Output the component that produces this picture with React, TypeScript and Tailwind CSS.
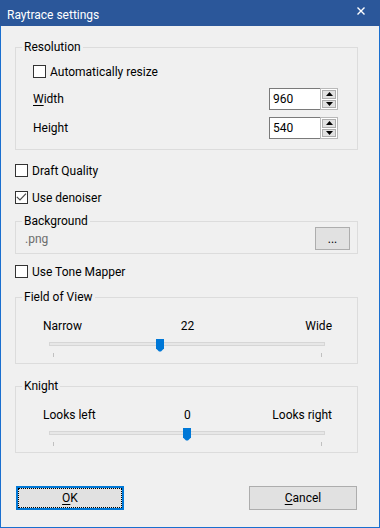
import React from 'react';

type SliderProps = { min: number; max: number; value: number };

const Checkbox: React.FC<{ label: React.ReactNode; checked?: boolean }> = ({ label, checked }) => (
  <div className="flex items-center gap-[4px] h-[13px]">
    <div className="w-[13px] h-[13px] border border-[#333333] bg-white flex items-center justify-center shrink-0">
      {checked && (
        <svg width="11" height="11" viewBox="0 0 11 11">
          <polyline points="0.8,4.8 4,8 10,1.6" fill="none" stroke="#4a4a4a" strokeWidth="1.2" />
        </svg>
      )}
    </div>
    <span className="leading-[16px]">{label}</span>
  </div>
);

const GroupBox: React.FC<{ title: string; children: React.ReactNode }> = ({ title, children }) => (
  <fieldset className="border border-[#dcdcdc] min-w-0">
    <legend className="ml-[6px] px-[2px] leading-[16px]">{title}</legend>
    {children}
  </fieldset>
);

const Arrow: React.FC<{ up?: boolean }> = ({ up }) => (
  <svg width="7" height="4" viewBox="0 0 7 4">
    {up ? <polygon points="0,4 7,4 3.5,0" fill="#000" /> : <polygon points="0,0 7,0 3.5,4" fill="#000" />}
  </svg>
);

const SpinBox: React.FC<{ value: number }> = ({ value }) => (
  <div className="flex">
    <div className="w-[51px] h-[22px] border-y border-l border-[#7a7a7a] bg-white pl-[3px] flex items-center">
      {value}
    </div>
    <div className="w-[18px] h-[22px] border border-[#b9b9b9] bg-white p-[1px] flex flex-col gap-[1px]">
      <div className="flex-1 bg-[#e1e1e1] border border-[#adadad] flex items-center justify-center">
        <Arrow up />
      </div>
      <div className="flex-1 bg-[#e1e1e1] border border-[#adadad] flex items-center justify-center">
        <Arrow />
      </div>
    </div>
  </div>
);

const Slider: React.FC<SliderProps> = ({ min, max, value }) => {
  const frac = (value - min) / (max - min);
  return (
    <div className="ml-[33px] w-[276px]">
      <div className="relative h-[13px]">
        <div className="absolute left-0 right-0 top-[3px] h-[4px] border border-[#d6d6d6] bg-[#e7e7e7]" />
        <svg
          className="absolute top-0"
          style={{ left: `${frac * 268}px` }}
          width="8"
          height="13"
          viewBox="0 0 8 13"
        >
          <polygon points="0,0 8,0 8,9.5 5,12.6 3,12.6 0,9.5" fill="#0078d7" />
        </svg>
      </div>
      <div className="mt-[1px] h-[4px] flex justify-between pl-[4px] pr-[3px]">
        <div className="w-[1px] h-full bg-[#c0c0c0]" />
        <div className="w-[1px] h-full bg-[#c0c0c0]" />
      </div>
    </div>
  );
};

const SliderGroup: React.FC<{ title: string; left: string; right: string } & SliderProps> = ({
  title,
  left,
  right,
  ...slider
}) => (
  <GroupBox title={title}>
    <div className="pt-[13px] pb-[6px]">
      <div className="grid grid-cols-3 pl-[27px] pr-[25px] leading-[16px]">
        <span>{left}</span>
        <span className="text-center">{slider.value}</span>
        <span className="text-right">{right}</span>
      </div>
      <div className="mt-[5px]">
        <Slider {...slider} />
      </div>
    </div>
  </GroupBox>
);

export default function App() {
  return (
    <div className="w-[380px] h-[528px] flex flex-col bg-[#f0f0f0] text-[12px] text-black font-['Roboto','Liberation_Sans',sans-serif]">
      <div className="h-[26px] shrink-0 bg-[#2b579a] flex justify-between text-white">
        <span className="pl-[7px] pt-[7px] leading-[16px]">Raytrace settings</span>
        <svg className="mt-[7px] mr-[15px]" width="8" height="8" viewBox="0 0 8 8">
          <path d="M0.5 0.5 L7.5 7.5 M7.5 0.5 L0.5 7.5" stroke="#fff" strokeWidth="1.4" />
        </svg>
      </div>

      <div className="flex-1 border-x border-b border-[#1a6fcf] pl-[14px] pr-[21px] flex flex-col">
        <div className="mt-[13px]">
          <GroupBox title="Resolution">
            <div className="pt-[10px] pb-[10px] pl-[17px] pr-[19px]">
              <Checkbox label="Automatically resize" />
              <div className="mt-[10px] h-[22px] flex items-center justify-between">
                <span>
                  <u className="underline-offset-2">W</u>idth
                </span>
                <SpinBox value={960} />
              </div>
              <div className="mt-[7px] h-[22px] flex items-center justify-between">
                <span>Height</span>
                <SpinBox value={540} />
              </div>
            </div>
          </GroupBox>
        </div>

        <div className="mt-[14px]">
          <Checkbox label="Draft Quality" />
        </div>
        <div className="mt-[14px]">
          <Checkbox label="Use denoiser" checked />
        </div>

        <div className="mt-[9px]">
          <GroupBox title="Background">
            <div className="-mt-[2px] pb-[3px] pl-[9px] pr-[7px] flex items-center justify-between">
              <span className="text-[#6d6d6d]">.png</span>
              <button className="w-[35px] h-[23px] border border-[#adadad] bg-[#e1e1e1] leading-[16px]">...</button>
            </div>
          </GroupBox>
        </div>

        <div className="mt-[11px]">
          <Checkbox label="Use Tone Mapper" />
        </div>

        <div className="mt-[11px]">
          <SliderGroup title="Field of View" left="Narrow" right="Wide" min={0} max={55} value={22} />
        </div>

        <div className="mt-[14px]">
          <SliderGroup title="Knight" left="Looks left" right="Looks right" min={-10} max={10} value={0} />
        </div>

        <div className="mt-[33px] px-[1px] flex justify-between">
          <button className="w-[108px] h-[24px] border-2 border-[#0078d7] bg-[#e1e1e1]">
            <div className="w-full h-full border border-dotted border-black flex items-center justify-center">
              <span>
                <u className="underline-offset-2">O</u>K
              </span>
            </div>
          </button>
          <button className="w-[108px] h-[24px] border border-[#adadad] bg-[#e1e1e1] flex items-center justify-center">
            <span>
              <u className="underline-offset-2">C</u>ancel
            </span>
          </button>
        </div>
      </div>
    </div>
  );
}
